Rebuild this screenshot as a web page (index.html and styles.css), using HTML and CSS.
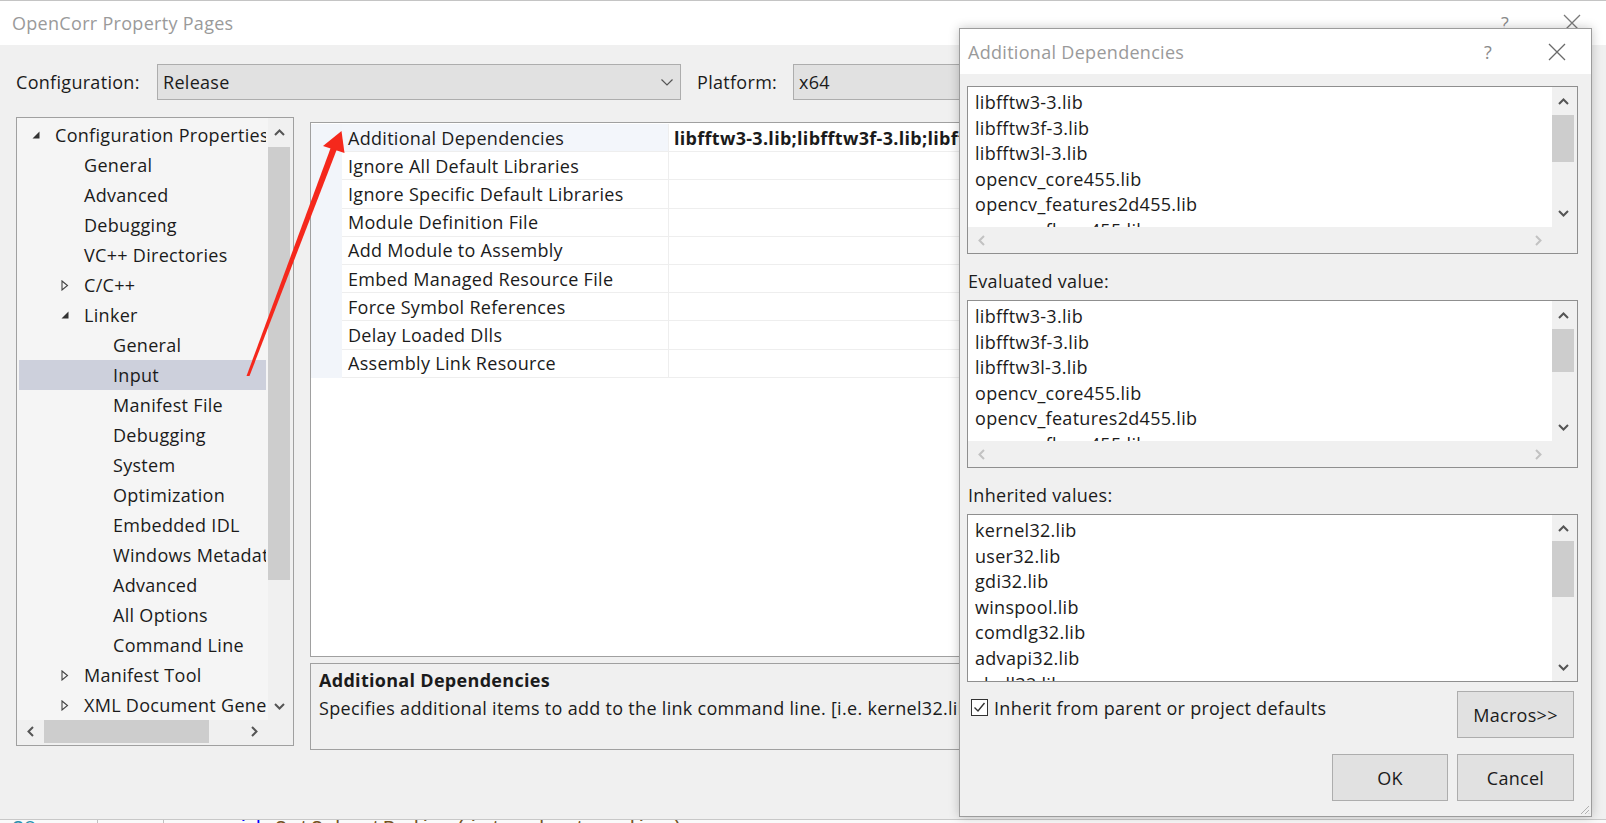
FILE: index.html
```html
<!DOCTYPE html>
<html>
<head>
<meta charset="utf-8">
<title>OpenCorr Property Pages</title>
<link rel="stylesheet" href="styles.css">
</head>
<body>
<div class="screen">
  <div class="window">
    <div class="titlebar">
      <span class="title">OpenCorr Property Pages</span>
      <div class="tb-btns">
        <span class="help">?</span>
        <svg class="close" width="18" height="18" viewBox="0 0 18 18"><path d="M1 1L17 17M17 1L1 17" stroke="#7a7a7a" stroke-width="1.3" fill="none"/></svg>
      </div>
    </div>

    <div class="config-row">
      <span class="cfg-label">Configuration:</span>
      <div class="combo combo-config">
        <span class="combo-text">Release</span>
        <svg class="chev" width="12" height="7" viewBox="0 0 12 7"><path d="M0.5 0.5L6 6L11.5 0.5" stroke="#555" stroke-width="1.2" fill="none"/></svg>
      </div>
      <span class="plat-label">Platform:</span>
      <div class="combo combo-plat"><span class="combo-text">x64</span></div>
    </div>

    <div class="main">
      <div class="tree">
        <div class="tree-body">
          <div class="tree-rows">
            <div class="row l0"><span class="tw"><svg width="8" height="8" viewBox="0 0 8 8"><path d="M7.5 0.5V7.5H0.5Z" fill="#333"/></svg></span><span class="rt">Configuration Properties</span></div>
            <div class="row l1"><span class="tw"></span><span class="rt">General</span></div>
            <div class="row l1"><span class="tw"></span><span class="rt">Advanced</span></div>
            <div class="row l1"><span class="tw"></span><span class="rt">Debugging</span></div>
            <div class="row l1"><span class="tw"></span><span class="rt">VC++ Directories</span></div>
            <div class="row l1"><span class="tw"><svg width="8" height="11" viewBox="0 0 8 11"><path d="M1 1L6.5 5.5L1 10Z" fill="none" stroke="#444" stroke-width="1.1"/></svg></span><span class="rt">C/C++</span></div>
            <div class="row l1"><span class="tw"><svg width="8" height="8" viewBox="0 0 8 8"><path d="M7.5 0.5V7.5H0.5Z" fill="#333"/></svg></span><span class="rt">Linker</span></div>
            <div class="row l2"><span class="tw"></span><span class="rt">General</span></div>
            <div class="row l2 sel"><span class="tw"></span><span class="rt">Input</span></div>
            <div class="row l2"><span class="tw"></span><span class="rt">Manifest File</span></div>
            <div class="row l2"><span class="tw"></span><span class="rt">Debugging</span></div>
            <div class="row l2"><span class="tw"></span><span class="rt">System</span></div>
            <div class="row l2"><span class="tw"></span><span class="rt">Optimization</span></div>
            <div class="row l2"><span class="tw"></span><span class="rt">Embedded IDL</span></div>
            <div class="row l2"><span class="tw"></span><span class="rt">Windows Metadata</span></div>
            <div class="row l2"><span class="tw"></span><span class="rt">Advanced</span></div>
            <div class="row l2"><span class="tw"></span><span class="rt">All Options</span></div>
            <div class="row l2"><span class="tw"></span><span class="rt">Command Line</span></div>
            <div class="row l1"><span class="tw"><svg width="8" height="11" viewBox="0 0 8 11"><path d="M1 1L6.5 5.5L1 10Z" fill="none" stroke="#444" stroke-width="1.1"/></svg></span><span class="rt">Manifest Tool</span></div>
            <div class="row l1"><span class="tw"><svg width="8" height="11" viewBox="0 0 8 11"><path d="M1 1L6.5 5.5L1 10Z" fill="none" stroke="#444" stroke-width="1.1"/></svg></span><span class="rt">XML Document Generator</span></div>
          </div>
          <div class="vscroll tree-vs">
            <div class="sb-btn"><svg width="11" height="7" viewBox="0 0 11 7"><path d="M1 6L5.5 1.5L10 6" stroke="#555" stroke-width="2" fill="none"/></svg></div>
            <div class="thumb tree-thumb"></div>
            <div class="sb-btn sb-down"><svg width="11" height="7" viewBox="0 0 11 7"><path d="M1 1L5.5 5.5L10 1" stroke="#555" stroke-width="2" fill="none"/></svg></div>
          </div>
        </div>
        <div class="hscroll-row">
          <div class="hscroll">
            <div class="hs-btn"><svg width="7" height="11" viewBox="0 0 7 11"><path d="M6 1L1.5 5.5L6 10" stroke="#555" stroke-width="2" fill="none"/></svg></div>
            <div class="hthumb"></div>
            <div class="hs-space"></div>
            <div class="hs-btn"><svg width="7" height="11" viewBox="0 0 7 11"><path d="M1 1L5.5 5.5L1 10" stroke="#555" stroke-width="2" fill="none"/></svg></div>
          </div>
          <div class="corner"></div>
        </div>
      </div>

      <div class="right-col">
        <div class="grid">
          <div class="grow first"><div class="gm"></div><div class="gl">Additional Dependencies</div><div class="gv">libfftw3-3.lib;libfftw3f-3.lib;libfftw3l-3.lib;opencv_core455.lib;opencv_features2d455.lib;%(AdditionalDependencies)</div></div>
          <div class="grow"><div class="gm"></div><div class="gl">Ignore All Default Libraries</div><div class="gv"></div></div>
          <div class="grow"><div class="gm"></div><div class="gl">Ignore Specific Default Libraries</div><div class="gv"></div></div>
          <div class="grow"><div class="gm"></div><div class="gl">Module Definition File</div><div class="gv"></div></div>
          <div class="grow"><div class="gm"></div><div class="gl">Add Module to Assembly</div><div class="gv"></div></div>
          <div class="grow"><div class="gm"></div><div class="gl">Embed Managed Resource File</div><div class="gv"></div></div>
          <div class="grow"><div class="gm"></div><div class="gl">Force Symbol References</div><div class="gv"></div></div>
          <div class="grow"><div class="gm"></div><div class="gl">Delay Loaded Dlls</div><div class="gv"></div></div>
          <div class="grow"><div class="gm"></div><div class="gl">Assembly Link Resource</div><div class="gv"></div></div>
        </div>
        <div class="desc">
          <div class="desc-title">Additional Dependencies</div>
          <div class="desc-text">Specifies additional items to add to the link command line. [i.e. kernel32.lib]</div>
        </div>
      </div>
    </div>
  </div>

  <div class="code-strip">
    <span class="ln">38</span><span class="vbar v1"></span><span class="vbar v2"></span><span class="kw">void</span><span class="fn">SetSubsetRadius(int subset_radius);</span>
  </div>

  <div class="dialog">
    <div class="dlg-title">
      <span class="title">Additional Dependencies</span>
      <div class="tb-btns dlg-btns">
        <span class="help">?</span>
        <svg class="close" width="18" height="18" viewBox="0 0 18 18"><path d="M1 1L17 17M17 1L1 17" stroke="#6a6a6a" stroke-width="1.3" fill="none"/></svg>
      </div>
    </div>
    <div class="dlg-body">
      <div class="lb">
        <div class="lb-list">
          <div class="li">libfftw3-3.lib</div>
          <div class="li">libfftw3f-3.lib</div>
          <div class="li">libfftw3l-3.lib</div>
          <div class="li">opencv_core455.lib</div>
          <div class="li">opencv_features2d455.lib</div>
          <div class="li">opencv_flann455.lib</div>
        </div>
        <div class="vscroll lb-vs">
          <div class="sb-btn"><svg width="11" height="7" viewBox="0 0 11 7"><path d="M1 6L5.5 1.5L10 6" stroke="#555" stroke-width="2" fill="none"/></svg></div>
          <div class="thumb th1"></div>
          <div class="sb-btn sb-down"><svg width="11" height="7" viewBox="0 0 11 7"><path d="M1 1L5.5 5.5L10 1" stroke="#555" stroke-width="2" fill="none"/></svg></div>
        </div>
        <div class="lb-hs">
          <svg width="7" height="11" viewBox="0 0 7 11"><path d="M6 1L1.5 5.5L6 10" stroke="#c2c2c2" stroke-width="2" fill="none"/></svg>
          <svg width="7" height="11" viewBox="0 0 7 11"><path d="M1 1L5.5 5.5L1 10" stroke="#c2c2c2" stroke-width="2" fill="none"/></svg>
        </div>
        <div class="lb-corner"></div>
      </div>

      <div class="lbl">Evaluated value:</div>
      <div class="lb">
        <div class="lb-list">
          <div class="li">libfftw3-3.lib</div>
          <div class="li">libfftw3f-3.lib</div>
          <div class="li">libfftw3l-3.lib</div>
          <div class="li">opencv_core455.lib</div>
          <div class="li">opencv_features2d455.lib</div>
          <div class="li">opencv_flann455.lib</div>
        </div>
        <div class="vscroll lb-vs">
          <div class="sb-btn"><svg width="11" height="7" viewBox="0 0 11 7"><path d="M1 6L5.5 1.5L10 6" stroke="#555" stroke-width="2" fill="none"/></svg></div>
          <div class="thumb th2"></div>
          <div class="sb-btn sb-down"><svg width="11" height="7" viewBox="0 0 11 7"><path d="M1 1L5.5 5.5L10 1" stroke="#555" stroke-width="2" fill="none"/></svg></div>
        </div>
        <div class="lb-hs">
          <svg width="7" height="11" viewBox="0 0 7 11"><path d="M6 1L1.5 5.5L6 10" stroke="#c2c2c2" stroke-width="2" fill="none"/></svg>
          <svg width="7" height="11" viewBox="0 0 7 11"><path d="M1 1L5.5 5.5L1 10" stroke="#c2c2c2" stroke-width="2" fill="none"/></svg>
        </div>
        <div class="lb-corner"></div>
      </div>

      <div class="lbl">Inherited values:</div>
      <div class="lb lb-nohs">
        <div class="lb-list">
          <div class="li">kernel32.lib</div>
          <div class="li">user32.lib</div>
          <div class="li">gdi32.lib</div>
          <div class="li">winspool.lib</div>
          <div class="li">comdlg32.lib</div>
          <div class="li">advapi32.lib</div>
          <div class="li">shell32.lib</div>
        </div>
        <div class="vscroll lb-vs">
          <div class="sb-btn sb-up3"><svg width="11" height="7" viewBox="0 0 11 7"><path d="M1 6L5.5 1.5L10 6" stroke="#555" stroke-width="2" fill="none"/></svg></div>
          <div class="thumb th3"></div>
          <div class="sb-btn sb-down"><svg width="11" height="7" viewBox="0 0 11 7"><path d="M1 1L5.5 5.5L10 1" stroke="#555" stroke-width="2" fill="none"/></svg></div>
        </div>
      </div>

      <div class="opts">
        <div class="chk">
          <span class="chk-box"><svg width="15" height="15" viewBox="0 0 15 15"><path d="M2.5 7.5L6 11L12.5 3" stroke="#333" stroke-width="1.4" fill="none"/></svg></span>
          <span>Inherit from parent or project defaults</span>
        </div>
        <div class="btn">Macros&gt;&gt;</div>
      </div>
      <div class="btn-row">
        <div class="btn btn-ok">OK</div>
        <div class="btn">Cancel</div>
      </div>
      <svg class="grip" width="12" height="12" viewBox="0 0 12 12"><path d="M11 3L3 11M11 7L7 11M11 10.5L10.5 11" stroke="#b0b0b0" stroke-width="1" fill="none"/></svg>
    </div>
  </div>

  <svg class="arrow" width="1606" height="823" viewBox="0 0 1606 823">
    <polygon points="246.5,376 249.5,376 337,149 331,147" fill="#f5281c"/>
    <polygon points="341.5,131 323,146 344.5,153" fill="#f5281c"/>
  </svg>
</div>
</body>
</html>
```

FILE: styles.css
```css
html, body {
  margin: 0;
  padding: 0;
}

.screen {
  position: relative;
  width: 1606px;
  height: 823px;
  overflow: hidden;
  background: #f0f0f0;
  font-family: "Open Sans", "Noto Sans", sans-serif;
  font-size: 18px;
  letter-spacing: 0.3px;
  color: #1b1b1b;
}

.window {
  width: 1606px;
  height: 819px;
  box-sizing: border-box;
  border-top: 1px solid #c4c4c4;
  background: #f0f0f0;
  display: flex;
  flex-direction: column;
}

.titlebar {
  height: 44px;
  flex: none;
  background: #fff;
  display: flex;
  align-items: center;
  padding: 0 25px 0 12px;
}

.title {
  flex: 1;
  color: #9a9a9a;
  white-space: nowrap;
}

.tb-btns {
  display: flex;
  align-items: center;
  gap: 48px;
}

.help {
  width: 20px;
  text-align: center;
  color: #8a8a8a;
  font-size: 18px;
}

.close {
  display: block;
}

.config-row {
  display: flex;
  align-items: center;
  height: 36px;
  margin-top: 19px;
  padding-left: 16px;
  flex: none;
}

.cfg-label {
  width: 141px;
}

.combo {
  height: 36px;
  box-sizing: border-box;
  border: 1px solid #adadad;
  background: #e1e1e1;
  display: flex;
  align-items: center;
  padding-left: 5px;
}

.combo-config {
  width: 524px;
  padding-right: 7px;
}

.combo-text {
  flex: 1;
}

.plat-label {
  margin-left: 16px;
  width: 96px;
}

.combo-plat {
  width: 700px;
}

.main {
  display: flex;
  align-items: flex-start;
  margin-top: 17px;
  padding: 0 16px;
  gap: 16px;
}

/* Tree */
.tree {
  width: 278px;
  height: 629px;
  flex: none;
  box-sizing: border-box;
  border: 1px solid #a0a0a0;
  background: #f0f0f0;
  display: flex;
  flex-direction: column;
}

.tree-body {
  display: flex;
  height: 602px;
}

.tree-rows {
  width: 251px;
  background: #f5f5f5;
  padding-top: 2px;
  box-sizing: border-box;
  overflow: hidden;
}

.row {
  height: 30px;
  margin: 0 2px;
  display: flex;
  align-items: center;
  white-space: nowrap;
  overflow: hidden;
}

.row.l0 { padding-left: 13px; }
.row.l1 { padding-left: 42px; }
.row.l2 { padding-left: 71px; }

.row.sel {
  background: #cdd0dc;
}

.tw {
  width: 23px;
  flex: none;
  display: flex;
  align-items: center;
}

.tw svg {
  display: block;
}

.vscroll {
  display: flex;
  flex-direction: column;
  background: #f0f0f0;
}

.tree-vs {
  width: 25px;
  padding-right: 3px;
  box-sizing: border-box;
}

.sb-btn {
  height: 28px;
  flex: none;
  display: flex;
  align-items: center;
  justify-content: center;
}

.sb-btn svg {
  display: block;
}

.sb-down {
  margin-top: auto;
}

.thumb {
  background: #cdcdcd;
  flex: none;
}

.tree-thumb {
  margin-top: 1px;
  height: 433px;
}

.hscroll-row {
  display: flex;
  height: 25px;
}

.hscroll {
  width: 251px;
  display: flex;
  align-items: flex-start;
}

.hs-btn {
  width: 27px;
  height: 23px;
  display: flex;
  align-items: center;
  justify-content: center;
}

.hthumb {
  width: 165px;
  height: 23px;
  background: #cdcdcd;
}

.hs-space {
  flex: 1;
}

.corner {
  width: 25px;
}

/* Right column */
.right-col {
  flex: 1;
  min-width: 0;
  margin-top: 5px;
  display: flex;
  flex-direction: column;
  gap: 6px;
}

.grid {
  height: 535px;
  box-sizing: border-box;
  border: 1px solid #a0a0a0;
  background: #fff;
  padding-top: 1px;
}

.grow {
  display: flex;
  height: 28.2px;
}

.gm {
  width: 31px;
  flex: none;
  background: #f2f5fa;
}

.gl {
  width: 327px;
  flex: none;
  box-sizing: border-box;
  padding-left: 6px;
  border-bottom: 1px solid #eeeeee;
  border-right: 1px solid #eeeeee;
  display: flex;
  align-items: center;
  white-space: nowrap;
}

.grow.first .gl {
  background: #f3f6fb;
}

.gv {
  flex: 1;
  min-width: 0;
  box-sizing: border-box;
  padding-left: 5px;
  border-bottom: 1px solid #eeeeee;
  font-weight: bold;
  white-space: nowrap;
  overflow: hidden;
  display: flex;
  align-items: center;
}

.desc {
  height: 87px;
  box-sizing: border-box;
  border: 1px solid #a0a0a0;
  background: #f0f0f0;
  padding: 2px 8px 0 8px;
  line-height: 28px;
  white-space: nowrap;
  overflow: hidden;
}

.desc-title {
  font-weight: bold;
}

/* Code strip under the window */
.code-strip {
  position: relative;
  height: 4px;
  background: #fafafa;
  border-top: 1px solid #c8c8c8;
  overflow: hidden;
  font-family: "Liberation Mono", monospace;
  font-size: 20px;
  line-height: 20px;
  letter-spacing: 0;
  white-space: nowrap;
}

.code-strip span {
  position: absolute;
  top: -1px;
}

.ln { left: 12px; color: #2b91af; }
.kw { left: 213px; color: #0000ff; }
.fn { left: 275px; color: #74531f; }
.vbar { width: 1px; height: 6px; background: #c0c0c0; }
.v1 { left: 97px; }
.v2 { left: 163px; }

/* Dialog */
.dialog {
  position: absolute;
  left: 959px;
  top: 28px;
  width: 633px;
  height: 789px;
  box-sizing: border-box;
  border: 1px solid #9c9c9c;
  background: #f0f0f0;
  box-shadow: 0 0 10px rgba(0, 0, 0, 0.22);
  display: flex;
  flex-direction: column;
}

.dlg-title {
  height: 45px;
  flex: none;
  background: #fff;
  display: flex;
  align-items: center;
  padding: 0 25px 0 8px;
}

.dlg-btns {
  gap: 50px;
}

.dlg-body {
  position: relative;
  flex: 1;
  padding: 12px 13px 0 7px;
}

.lb {
  height: 168px;
  box-sizing: border-box;
  border: 1px solid #8f8f8f;
  background: #f0f0f0;
  display: grid;
  grid-template-columns: 1fr 25px;
  grid-template-rows: 1fr 26px;
}

.lb-nohs {
  grid-template-rows: 1fr;
}

.lb-list {
  background: #fff;
  padding: 3px 0 0 7px;
  overflow: hidden;
  min-height: 0;
}

.li {
  height: 25.6px;
  line-height: 25.6px;
  white-space: nowrap;
}

.lb-vs {
  padding-right: 3px;
  min-height: 0;
}

.th1 { height: 47px; }
.th2 { height: 43px; }
.th3 { height: 56px; }
.sb-up3 { height: 26px; }

.lb-hs {
  display: flex;
  align-items: center;
  justify-content: space-between;
  padding: 0 10px;
}

.lb-hs svg {
  display: block;
}

.lbl {
  height: 46px;
  box-sizing: border-box;
  padding: 15px 0 0 1px;
  line-height: 24px;
}

.opts {
  display: flex;
  justify-content: space-between;
  align-items: flex-start;
  margin-top: 9px;
  padding-right: 4px;
}

.chk {
  display: flex;
  align-items: center;
  gap: 6px;
  margin-top: 7px;
  margin-left: 4px;
  height: 19px;
}

.chk-box {
  width: 17px;
  height: 17px;
  box-sizing: border-box;
  border: 1px solid #333;
  background: #fff;
  display: flex;
  align-items: center;
  justify-content: center;
}

.chk-box svg {
  display: block;
}

.btn {
  width: 117px;
  height: 47px;
  box-sizing: border-box;
  border: 1px solid #adadad;
  background: #e1e1e1;
  display: flex;
  align-items: center;
  justify-content: center;
}

.btn-row {
  display: flex;
  justify-content: flex-end;
  gap: 9px;
  margin-top: 16px;
  padding-right: 4px;
}

.btn-ok {
  width: 116px;
}

.grip {
  position: absolute;
  right: 1px;
  bottom: 1px;
}

/* Red annotation arrow */
.arrow {
  position: absolute;
  left: 0;
  top: 0;
  pointer-events: none;
}
```
